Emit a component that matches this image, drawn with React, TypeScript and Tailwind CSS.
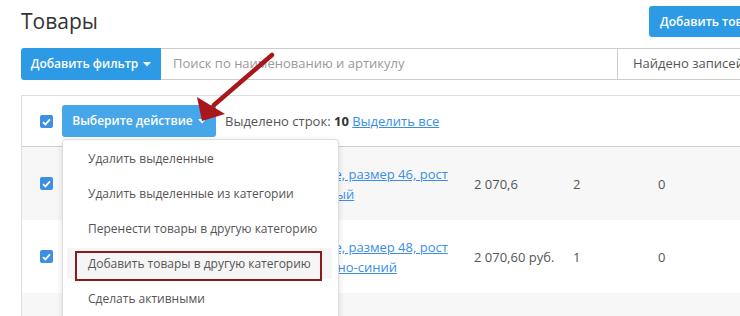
import React from 'react'

function Caret() {
  return (
    <svg width="8" height="5" viewBox="0 0 8 5" className="ml-[5px] mt-[1px]" aria-hidden="true">
      <path d="M0 0 L8 0 L4 4.5 Z" fill="#fff" />
    </svg>
  )
}

function Checkbox() {
  return (
    <span className="inline-flex w-[13px] h-[13px] items-center justify-center rounded-[2px] bg-[#3d8fe2]">
      <svg width="9" height="8" viewBox="0 0 9 8" fill="none" stroke="#fff" strokeWidth="1.8" aria-hidden="true">
        <path d="M1 4.2 L3.4 6.4 L8 1.4" />
      </svg>
    </span>
  )
}

const ACTIONS = [
  'Удалить выделенные',
  'Удалить выделенные из категории',
  'Перенести товары в другую категорию',
  'Добавить товары в другую категорию',
  'Сделать активными',
]

const ROWS = [
  { lines: ['Брюки мужские рабочие, синие, размер 46, рост', '170-176, серый'], price: '2 070,6', qty: '2', rest: '0', bg: 'bg-[#f7f7f7]' },
  { lines: ['Брюки мужские рабочие, синие, размер 48, рост', '170-176, темно-синий'], price: '2 070,60 руб.', qty: '1', rest: '0', bg: 'bg-white' },
  { lines: ['', ''], price: '', qty: '', rest: '', bg: 'bg-[#f7f7f7]' },
]

export default function App() {
  return (
    <div className="relative w-[740px] h-[316px] overflow-hidden bg-white font-['Open_Sans',sans-serif] text-[13px] text-[#555]">
      <div className="w-[900px] pl-[21px]">
        {/* header */}
        <div className="flex h-[48px]">
          <h1 className="w-[628px] pt-[5px] text-[21px] leading-[32px] font-normal text-[#333]">Товары</h1>
          <button
            type="button"
            className="mt-[6px] h-[31px] px-[11px] rounded-[3px] bg-[#2d9ae6] text-white font-semibold text-[12px] whitespace-nowrap"
          >
            Добавить товар
          </button>
        </div>

        {/* filter bar */}
        <div className="flex h-[32px]">
          <button
            type="button"
            className="w-[140px] flex items-center justify-center rounded-l-[3px] bg-[#2d9ae6] text-white font-semibold text-[12px] whitespace-nowrap"
          >
            Добавить фильтр
            <Caret />
          </button>
          <div className="w-[456px] flex items-center pl-[12px] border-y border-[#ccc] text-[#999]">
            Поиск по наименованию и артикулу
          </div>
          <div className="w-[200px] flex items-center pl-[15px] border border-[#ccc] text-[#555]">
            Найдено записей:
          </div>
        </div>

        {/* table */}
        <div className="mt-[15px] border-l border-t border-[#ddd]">
          <div className="relative flex items-start h-[51px] pt-[9px] border-b border-[#ccc]">
            <div className="w-[40px] pl-[18px] pt-[10px] flex">
              <Checkbox />
            </div>
            <div className="relative">
              <button
                type="button"
                className="w-[154px] h-[32px] flex items-center justify-center rounded-[3px] bg-[#47a6ea] text-white font-semibold text-[12px] whitespace-nowrap"
              >
                Выберите действие
                <Caret />
              </button>
              <div className="absolute left-0 top-full mt-[2px] z-10 w-[277px] h-[200px] pt-[1px] pr-[6px] pl-[4px] flex flex-col bg-white border border-[#ddd] rounded-[4px] shadow-[0_2px_6px_rgba(0,0,0,0.12)]">
                {ACTIONS.map((a, i) => (
                  <div
                    key={a}
                    className={`relative shrink-0 h-[31px] my-[2px] pl-[21px] flex items-center whitespace-nowrap text-[12px] ${i === 3 ? 'bg-[#f5f5f5] rounded-[3px]' : ''}`}
                  >
                    {a}
                    {i === 3 && (
                      <span className="absolute left-[8px] top-[3px] w-[247px] h-[30px] border-2 border-[#8b1a1a]" />
                    )}
                  </div>
                ))}
              </div>
            </div>
            <div className="pl-[9px] pt-[6px] leading-[20px]">
              Выделено строк: <b className="text-[#333]">10</b>{' '}
              <a href="#" className="text-[#3a8ee6] underline">Выделить все</a>
            </div>
          </div>

          {ROWS.map((r, i) => (
            <div key={i} className={`flex items-center h-[73px] leading-[20px] ${r.bg}`}>
              <div className="w-[90px] pl-[18px] flex">{r.lines[0] && <Checkbox />}</div>
              <div className="w-[362px] whitespace-nowrap">
                <a href="#" className="block text-[#3a8ee6] underline pl-[28px]">{r.lines[0]}</a>
                <a href="#" className="block text-[#3a8ee6] underline pl-[147px]">{r.lines[1]}</a>
              </div>
              <div className="w-[99px] whitespace-nowrap">{r.price}</div>
              <div className="w-[85px]">{r.qty}</div>
              <div className="w-[80px]">{r.rest}</div>
            </div>
          ))}
        </div>
      </div>

      {/* annotation arrow */}
      <svg className="absolute left-0 top-0 pointer-events-none" width="740" height="316" viewBox="0 0 740 316" aria-hidden="true">
        <line x1="272" y1="55" x2="214" y2="105" stroke="#a8171b" strokeWidth="4.5" strokeLinecap="round" />
        <path d="M202 121 L197 97 L225 114 Z" fill="#a8171b" />
      </svg>
    </div>
  )
}
